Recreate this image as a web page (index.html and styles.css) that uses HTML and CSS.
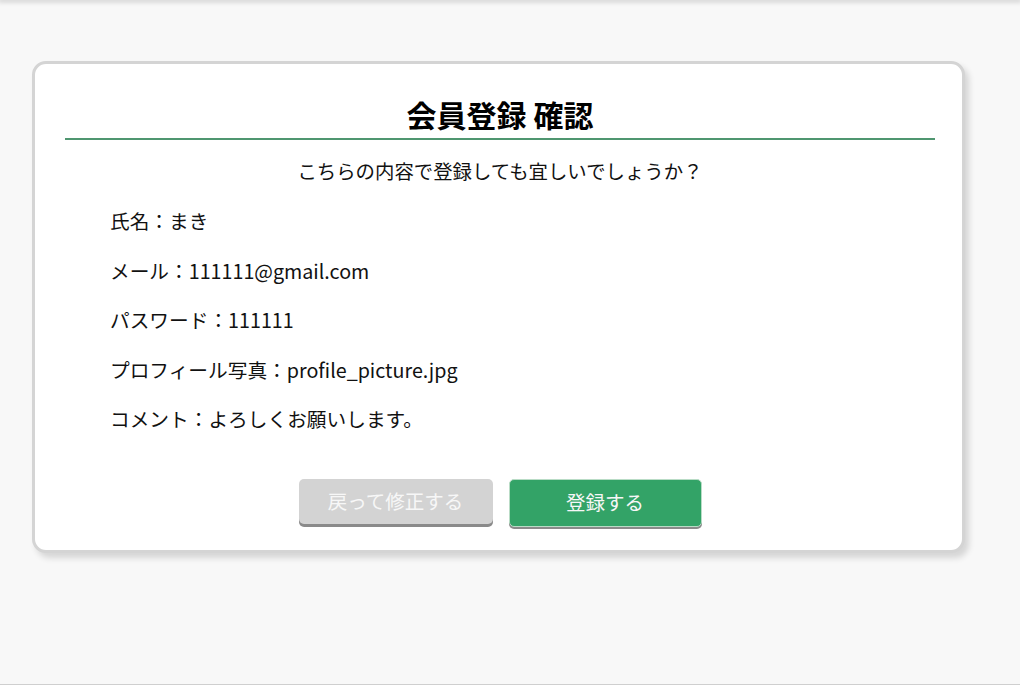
FILE: index.html
```html
<!DOCTYPE html>
<html lang="ja">
<head>
<meta charset="utf-8">
<title>会員登録 確認</title>
<link rel="stylesheet" href="styles.css">
</head>
<body>
<div class="topbar"></div>
<main class="page">
  <section class="card">
    <h1 class="title">会員登録 確認</h1>
    <p class="lead">こちらの内容で登録しても宜しいでしょうか？</p>
    <ul class="fields">
      <li>氏名：まき</li>
      <li>メール：111111@gmail.com</li>
      <li>パスワード：111111</li>
      <li>プロフィール写真：profile_picture.jpg</li>
      <li>コメント：よろしくお願いします。</li>
    </ul>
    <div class="actions">
      <button class="btn btn-back" type="button">戻って修正する</button>
      <button class="btn btn-submit" type="button">登録する</button>
    </div>
  </section>
</main>
<div class="bottomline"></div>
</body>
</html>
```

FILE: styles.css
```css
html, body {
  margin: 0;
  padding: 0;
}
body {
  background: #f8f8f8;
  font-family: "Noto Sans CJK JP", "Noto Sans", sans-serif;
  color: #111;
  height: 685px;
  overflow: hidden;
  position: relative;
}
.topbar {
  height: 0;
  box-shadow: 0 0 5px 2px rgba(0,0,0,0.18);
}
.page {
  padding: 61px 0 0 32px;
}
.card {
  box-sizing: border-box;
  width: 933px;
  height: 492px;
  background: #fff;
  border: 3px solid #d4d4d4;
  border-radius: 14px;
  box-shadow: 4px 5px 6px rgba(0,0,0,0.14);
  padding: 0 27px 0 30px;
}
.title {
  margin: 0;
  padding-top: 27px;
  height: 47px;
  font-size: 30px;
  line-height: 47px;
  font-weight: 700;
  text-align: center;
  color: #000;
  border-bottom: 2px solid #4f9670;
}
.lead {
  margin: 0;
  padding-top: 16px;
  font-size: 19.4px;
  line-height: 30px;
  text-align: center;
}
.fields {
  list-style: none;
  margin: 0;
  padding: 20px 0 0 45px;
}
.fields li {
  font-size: 19.7px;
  line-height: 30px;
  height: 30px;
  margin-bottom: 19.5px;
}
.actions {
  display: flex;
  justify-content: center;
  gap: 16px;
  padding-top: 25px;
}
.btn {
  width: 194px;
  height: 48px;
  border-radius: 5px;
  font-family: "Noto Sans CJK JP", "Noto Sans", sans-serif;
  font-size: 19.5px;
  color: #f7f7f7;
  cursor: pointer;
  padding: 0 0 2px;
}
.btn-back {
  background: #d3d3d3;
  border: none;
  box-shadow: 0 3px 0 #8a8a8a;
  height: 45px;
}
.btn-submit {
  width: 193px;
  background: #33a367;
  border: 1px solid #b9dcc6;
  box-shadow: 0 2px 0 #8a8a8a;
}
.bottomline {
  position: absolute;
  left: 0;
  right: 0;
  bottom: 0;
  height: 1px;
  background: #cfcfcf;
}
```
